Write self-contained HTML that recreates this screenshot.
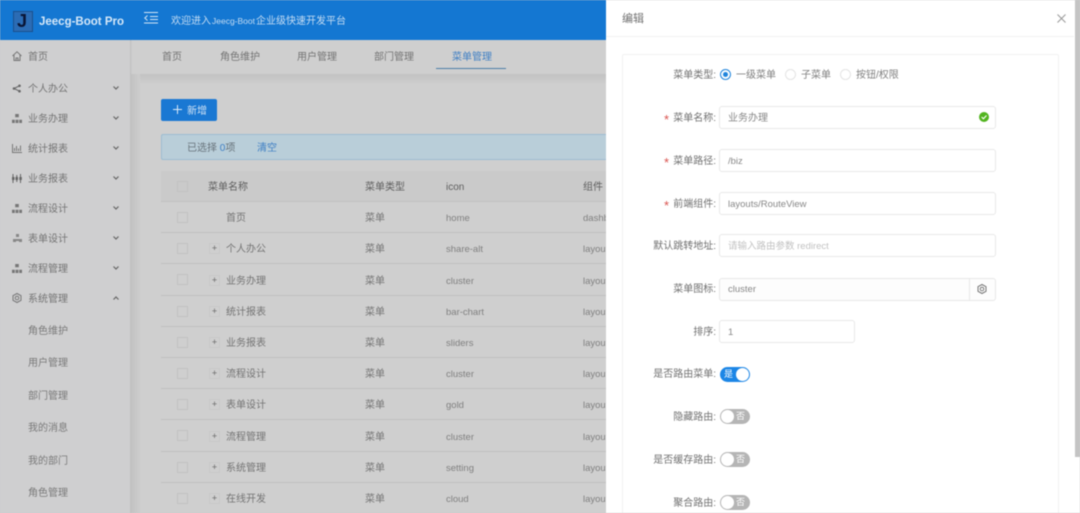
<!DOCTYPE html>
<html lang="zh"><head><meta charset="utf-8"><title>Jeecg-Boot Pro</title>
<style>
html,body{margin:0;padding:0;width:1080px;height:513px;overflow:hidden;background:#cbcbcc}
body{font-family:"Liberation Sans","Noto Sans CJK SC",sans-serif;font-size:10px;color:#6e6e6e}
#r{position:absolute;left:0;top:0;width:1080px;height:513px;overflow:hidden;filter:blur(.45px)}
.b{position:absolute;box-sizing:border-box}
.t{position:absolute;line-height:14px;white-space:nowrap;margin-top:4px}
.c{position:absolute;left:177px;width:11px;height:11px;border:1px solid #c2c2c2;box-sizing:border-box}
.p{position:absolute;left:209px;width:11px;height:11px;border:1px solid #c8c8c8;box-sizing:border-box;text-align:center;line-height:8px;font-size:9px;color:#666}
.l{position:absolute;left:161px;width:445px;height:1px;background:#c0c0c0}
.m{left:28px;color:#747474}
.s{left:28px;color:#7a7a7a}
.n{left:226px;color:#747474}
.y{left:365px;color:#747474}
.i{left:446px;color:#808080;font-size:9.5px}
.u{left:583px;color:#808080;font-size:9.5px}
.f{color:#707070;text-align:right;right:364px}
.d{position:absolute;color:#d9534f;font-size:13px;line-height:14px}
.in{position:absolute;left:719px;width:277px;height:23px;border:1px solid #e8e8e8;border-radius:3px;background:#fff;box-sizing:border-box}
.v{left:728px;color:#888;font-size:9.5px}
.sw{position:absolute;left:720px;width:30px;height:15px;border-radius:8px;background:#b5b5b5;color:#fff;font-size:9px;line-height:15px}
.sw i{position:absolute;left:1px;top:1px;width:13px;height:13px;border-radius:50%;background:#fff}
.sw span{position:absolute;left:16px;top:0}
.ra{position:absolute;width:11px;height:11px;border:1px solid #e4e4e4;border-radius:50%;box-sizing:border-box;top:69px}
svg{position:absolute;overflow:visible}
.ar{fill:none;stroke:#666;stroke-width:1.2}
.ic{fill:none;stroke:#777;stroke-width:1}
</style></head><body><div id="r">

<!-- header -->
<div class="b" style="left:0;top:0;width:606px;height:40px;background:#1477d2"></div>
<div class="b" style="left:13px;top:11px;width:20px;height:21px;background:#2b6cb5;border:1px solid #1b4f8c"></div>
<div class="t" style="left:17px;top:8px;font-size:18px;line-height:19px;font-weight:bold;color:#0a1535">J</div>
<div class="t" style="left:39px;top:11px;font-size:11.5px;font-weight:bold;color:#d6e8f8">Jeecg-Boot Pro</div>
<svg style="left:144px;top:12px" width="15" height="12"><path d="M0 .5H14M6 4.5H14M6 7.5H14M0 11H14M3.5 3.5L.8 6L3.5 8.5" fill="none" stroke="#d5e6f6" stroke-width="1"/></svg>
<div class="t" style="left:171px;top:10px;color:#c4dcf3;word-spacing:-1.8px">欢迎进入 <span style="font-size:8.5px">Jeecg-Boot</span> 企业级快速开发平台</div>

<!-- sidebar -->
<div class="b" style="left:0;top:40px;width:131px;height:473px;background:#cfcfd0;border-right:1px solid #c0c0c0"></div>
<svg style="left:12px;top:51px" width="10" height="10" class="ic"><path d="M.5 5L5 .8L9.5 5M2 4V9.5H8V4M4 9.5V7H6V9.5"/></svg>
<svg style="left:12px;top:84px" width="10" height="9"><circle cx="2" cy="4.5" r="1.3" fill="#666"/><circle cx="7.5" cy="1.8" r="1.3" fill="#666"/><circle cx="7.5" cy="7.2" r="1.3" fill="#666"/><path d="M2 4.5L7.5 1.8M2 4.5L7.5 7.2" stroke="#666"/></svg>
<svg style="left:12px;top:114px" width="10" height="9"><path d="M3.2 0H6.8V3.2H3.2ZM0 5.8H2.8V9H0ZM3.6 5.8H6.4V9H3.6ZM7.2 5.8H10V9H7.2Z" fill="#777"/></svg>
<svg style="left:12px;top:144px" width="10" height="9" class="ic"><path d="M.5 0V8.5H10M2.5 7V4M4.5 7V2M6.5 7V4.5M8.5 7V1.5" /></svg>
<svg style="left:12px;top:174px" width="10" height="9"><path d="M1 0V9M8.5 0V9M4.8 1V8" stroke="#666" stroke-width="1"/><path d="M0 3H2.5V6H0ZM3.5 3H6V6H3.5ZM7.3 3H9.8V6H7.3Z" fill="#666"/></svg>
<svg style="left:12px;top:204px" width="10" height="9"><path d="M3.2 0H6.8V3.2H3.2ZM0 5.8H2.8V9H0ZM3.6 5.8H6.4V9H3.6ZM7.2 5.8H10V9H7.2Z" fill="#777"/></svg>
<svg style="left:13px;top:234px" width="9" height="8"><path d="M3 0H6V3H3ZM0 5H3V8H0ZM6 5H9V8H6ZM3 5H6V7H3Z" fill="#888"/></svg>
<svg style="left:12px;top:264px" width="10" height="9"><path d="M3.2 0H6.8V3.2H3.2ZM0 5.8H2.8V9H0ZM3.6 5.8H6.4V9H3.6ZM7.2 5.8H10V9H7.2Z" fill="#777"/></svg>
<svg style="left:12px;top:293px" width="10" height="10" class="ic"><path d="M5 .5L9 2.7V7.3L5 9.5L1 7.3V2.7Z"/><circle cx="5" cy="5" r="1.8"/></svg>
<div class="t m" style="top:47px">首页</div>
<div class="t m" style="top:79px">个人办公</div>
<div class="t m" style="top:109px">业务办理</div>
<div class="t m" style="top:139px">统计报表</div>
<div class="t m" style="top:169px">业务报表</div>
<div class="t m" style="top:199px">流程设计</div>
<div class="t m" style="top:229px">表单设计</div>
<div class="t m" style="top:259px">流程管理</div>
<div class="t m" style="top:289px">系统管理</div>
<div class="t s" style="top:321px">角色维护</div>
<div class="t s" style="top:353px">用户管理</div>
<div class="t s" style="top:386px">部门管理</div>
<div class="t s" style="top:418px">我的消息</div>
<div class="t s" style="top:451px">我的部门</div>
<div class="t s" style="top:483px">角色管理</div>
<svg style="left:113px;top:86px" width="6" height="4" class="ar"><path d="M.5 .5L3 3L5.5 .5"/></svg>
<svg style="left:113px;top:116px" width="6" height="4" class="ar"><path d="M.5 .5L3 3L5.5 .5"/></svg>
<svg style="left:113px;top:146px" width="6" height="4" class="ar"><path d="M.5 .5L3 3L5.5 .5"/></svg>
<svg style="left:113px;top:176px" width="6" height="4" class="ar"><path d="M.5 .5L3 3L5.5 .5"/></svg>
<svg style="left:113px;top:206px" width="6" height="4" class="ar"><path d="M.5 .5L3 3L5.5 .5"/></svg>
<svg style="left:113px;top:236px" width="6" height="4" class="ar"><path d="M.5 .5L3 3L5.5 .5"/></svg>
<svg style="left:113px;top:266px" width="6" height="4" class="ar"><path d="M.5 .5L3 3L5.5 .5"/></svg>
<svg style="left:113px;top:296px" width="6" height="4" class="ar"><path d="M.5 3.5L3 1L5.5 3.5"/></svg>

<!-- tabs -->
<div class="b" style="left:132px;top:40px;width:474px;height:34px;background:#cfcfcf"></div>
<div class="t" style="left:162px;top:47px;color:#747474">首页</div>
<div class="t" style="left:220px;top:47px;color:#747474">角色维护</div>
<div class="t" style="left:297px;top:47px;color:#747474">用户管理</div>
<div class="t" style="left:374px;top:47px;color:#747474">部门管理</div>
<div class="t" style="left:452px;top:47px;color:#3f7fc4">菜单管理</div>
<div class="b" style="left:436px;top:68px;width:70px;height:1px;background:#4d7fa8"></div>

<!-- content -->
<div class="b" style="left:132px;top:74px;width:474px;height:9px;background:linear-gradient(#c2c2c2,#cdcdcd)"></div>
<div class="b" style="left:131px;top:74px;width:9px;height:439px;background:linear-gradient(90deg,#c2c2c2,#cdcdcd)"></div>
<div class="b" style="left:140px;top:83px;width:466px;height:430px;background:#cfcfcf"></div>
<div class="b" style="left:161px;top:99px;width:56px;height:22px;background:#1a78d3;border-radius:2px"></div>
<svg style="left:173px;top:105px" width="9" height="9"><path d="M4.5 0V9M0 4.5H9" stroke="#dbeaf8" stroke-width="1"/></svg>
<div class="t" style="left:187px;top:101px;color:#cfe2f5">新增</div>
<div class="b" style="left:161px;top:134px;width:445px;height:26px;background:#b9ced9;border:1px solid #9dbdd2;border-right:0;border-radius:2px 0 0 2px"></div>
<div class="t" style="left:187px;top:138px;color:#68737b">已选择 <span style="color:#3f7fc4">0</span>项</div>
<div class="t" style="left:257px;top:138px;color:#3f7fc4">清空</div>

<!-- table -->
<div class="b" style="left:161px;top:171px;width:445px;height:30px;background:#cacaca"></div>
<div class="c" style="top:181px"></div>
<div class="t" style="left:208px;top:177px;color:#5e5e5e">菜单名称</div>
<div class="t" style="left:365px;top:177px;color:#5e5e5e">菜单类型</div>
<div class="t" style="left:446px;top:177px;color:#5e5e5e">icon</div>
<div class="t" style="left:583px;top:177px;color:#5e5e5e">组件</div>
<div class="l" style="top:201px"></div><div class="l" style="top:232px"></div><div class="l" style="top:263px"></div><div class="l" style="top:295px"></div><div class="l" style="top:326px"></div><div class="l" style="top:357px"></div><div class="l" style="top:388px"></div><div class="l" style="top:419px"></div><div class="l" style="top:451px"></div><div class="l" style="top:482px"></div>

<div class="c" style="top:212px"></div><div class="t n" style="top:208px">首页</div><div class="t y" style="top:208px">菜单</div><div class="t i" style="top:208px">home</div><div class="t u" style="top:208px">dashboard</div>
<div class="c" style="top:243px"></div><div class="p" style="top:243px">+</div><div class="t n" style="top:239px">个人办公</div><div class="t y" style="top:239px">菜单</div><div class="t i" style="top:239px">share-alt</div><div class="t u" style="top:239px">layouts</div>
<div class="c" style="top:274px"></div><div class="p" style="top:275px">+</div><div class="t n" style="top:271px">业务办理</div><div class="t y" style="top:271px">菜单</div><div class="t i" style="top:271px">cluster</div><div class="t u" style="top:271px">layouts</div>
<div class="c" style="top:306px"></div><div class="p" style="top:306px">+</div><div class="t n" style="top:302px">统计报表</div><div class="t y" style="top:302px">菜单</div><div class="t i" style="top:302px">bar-chart</div><div class="t u" style="top:302px">layouts</div>
<div class="c" style="top:337px"></div><div class="p" style="top:337px">+</div><div class="t n" style="top:333px">业务报表</div><div class="t y" style="top:333px">菜单</div><div class="t i" style="top:333px">sliders</div><div class="t u" style="top:333px">layouts</div>
<div class="c" style="top:368px"></div><div class="p" style="top:368px">+</div><div class="t n" style="top:364px">流程设计</div><div class="t y" style="top:364px">菜单</div><div class="t i" style="top:364px">cluster</div><div class="t u" style="top:364px">layouts</div>
<div class="c" style="top:399px"></div><div class="p" style="top:399px">+</div><div class="t n" style="top:395px">表单设计</div><div class="t y" style="top:395px">菜单</div><div class="t i" style="top:395px">gold</div><div class="t u" style="top:395px">layouts</div>
<div class="c" style="top:430px"></div><div class="p" style="top:431px">+</div><div class="t n" style="top:427px">流程管理</div><div class="t y" style="top:427px">菜单</div><div class="t i" style="top:427px">cluster</div><div class="t u" style="top:427px">layouts</div>
<div class="c" style="top:462px"></div><div class="p" style="top:462px">+</div><div class="t n" style="top:458px">系统管理</div><div class="t y" style="top:458px">菜单</div><div class="t i" style="top:458px">setting</div><div class="t u" style="top:458px">layouts</div>
<div class="c" style="top:493px"></div><div class="p" style="top:493px">+</div><div class="t n" style="top:489px">在线开发</div><div class="t y" style="top:489px">菜单</div><div class="t i" style="top:489px">cloud</div><div class="t u" style="top:489px">layouts</div>

<!-- drawer -->
<div class="b" style="left:606px;top:0;width:474px;height:513px;background:#fff;overflow:hidden"></div>
<div class="b" style="left:606px;top:36px;width:468px;height:1px;background:#f2f2f2"></div>
<div class="b" style="left:1075px;top:0;width:5px;height:457px;background:#c4c4c4"></div>
<div class="t" style="left:622px;top:8px;font-size:11px;color:#707070">编辑</div>
<svg style="left:1057px;top:14px" width="9" height="9"><path d="M.5 .5L8.5 8.5M8.5 .5L.5 8.5" stroke="#999" stroke-width="1"/></svg>
<div class="b" style="left:622px;top:54px;width:437px;height:470px;border:1px solid #f2f2f2;border-radius:2px"></div>

<div class="t f" style="top:65px">菜单类型:</div>
<div class="t" style="left:736px;top:65px;color:#808080">一级菜单</div>
<div class="t" style="left:801px;top:65px;color:#808080">子菜单</div>
<div class="t" style="left:856px;top:65px;color:#808080">按钮/权限</div>
<div class="ra" style="left:720px;border-color:#1f84dc"></div><div class="b" style="left:723px;top:72px;width:5px;height:5px;border-radius:50%;background:#1f84dc"></div>
<div class="ra" style="left:785px"></div><div class="ra" style="left:840px"></div>

<div class="d" style="left:664px;top:113px">*</div><div class="t f" style="top:108px">菜单名称:</div>
<div class="in" style="top:106px"></div><div class="t v" style="top:108px;font-size:10px">业务办理</div>
<svg style="left:979px;top:112px" width="10" height="10"><circle cx="5" cy="5" r="5" fill="#52b41f"/><path d="M2.6 5L4.4 6.8L7.5 3.5" fill="none" stroke="#fff" stroke-width="1.1"/></svg>

<div class="d" style="left:664px;top:156px">*</div><div class="t f" style="top:151px">菜单路径:</div>
<div class="in" style="top:149px"></div><div class="t v" style="top:151px">/biz</div>

<div class="d" style="left:664px;top:199px">*</div><div class="t f" style="top:194px">前端组件:</div>
<div class="in" style="top:192px"></div><div class="t v" style="top:194px">layouts/RouteView</div>

<div class="t f" style="top:236px">默认跳转地址:</div>
<div class="in" style="top:234px"></div><div class="t v" style="top:236px;color:#c2c2c2">请输入路由参数 redirect</div>

<div class="t f" style="top:279px">菜单图标:</div>
<div class="in" style="top:278px;background:#fdfdfd"></div><div class="b" style="left:969px;top:278px;width:1px;height:23px;background:#e8e8e8"></div>
<div class="t v" style="top:279px">cluster</div>
<svg style="left:977px;top:284px" width="10" height="10" class="ic"><path d="M5 .5L9 2.7V7.3L5 9.5L1 7.3V2.7Z"/><circle cx="5" cy="5" r="1.8"/></svg>

<div class="t f" style="top:322px">排序:</div>
<div class="in" style="top:320px;width:136px"></div><div class="t v" style="top:322px">1</div>

<div class="t f" style="top:364px">是否路由菜单:</div>
<div class="sw" style="top:367px;background:#1c86e6"><span style="left:4px">是</span><i style="left:16px"></i></div>
<div class="t f" style="top:407px">隐藏路由:</div>
<div class="sw" style="top:409px"><i></i><span>否</span></div>
<div class="t f" style="top:450px">是否缓存路由:</div>
<div class="sw" style="top:452px"><i></i><span>否</span></div>
<div class="t f" style="top:493px">聚合路由:</div>
<div class="sw" style="top:495px"><i></i><span>否</span></div>
</div></body></html>
